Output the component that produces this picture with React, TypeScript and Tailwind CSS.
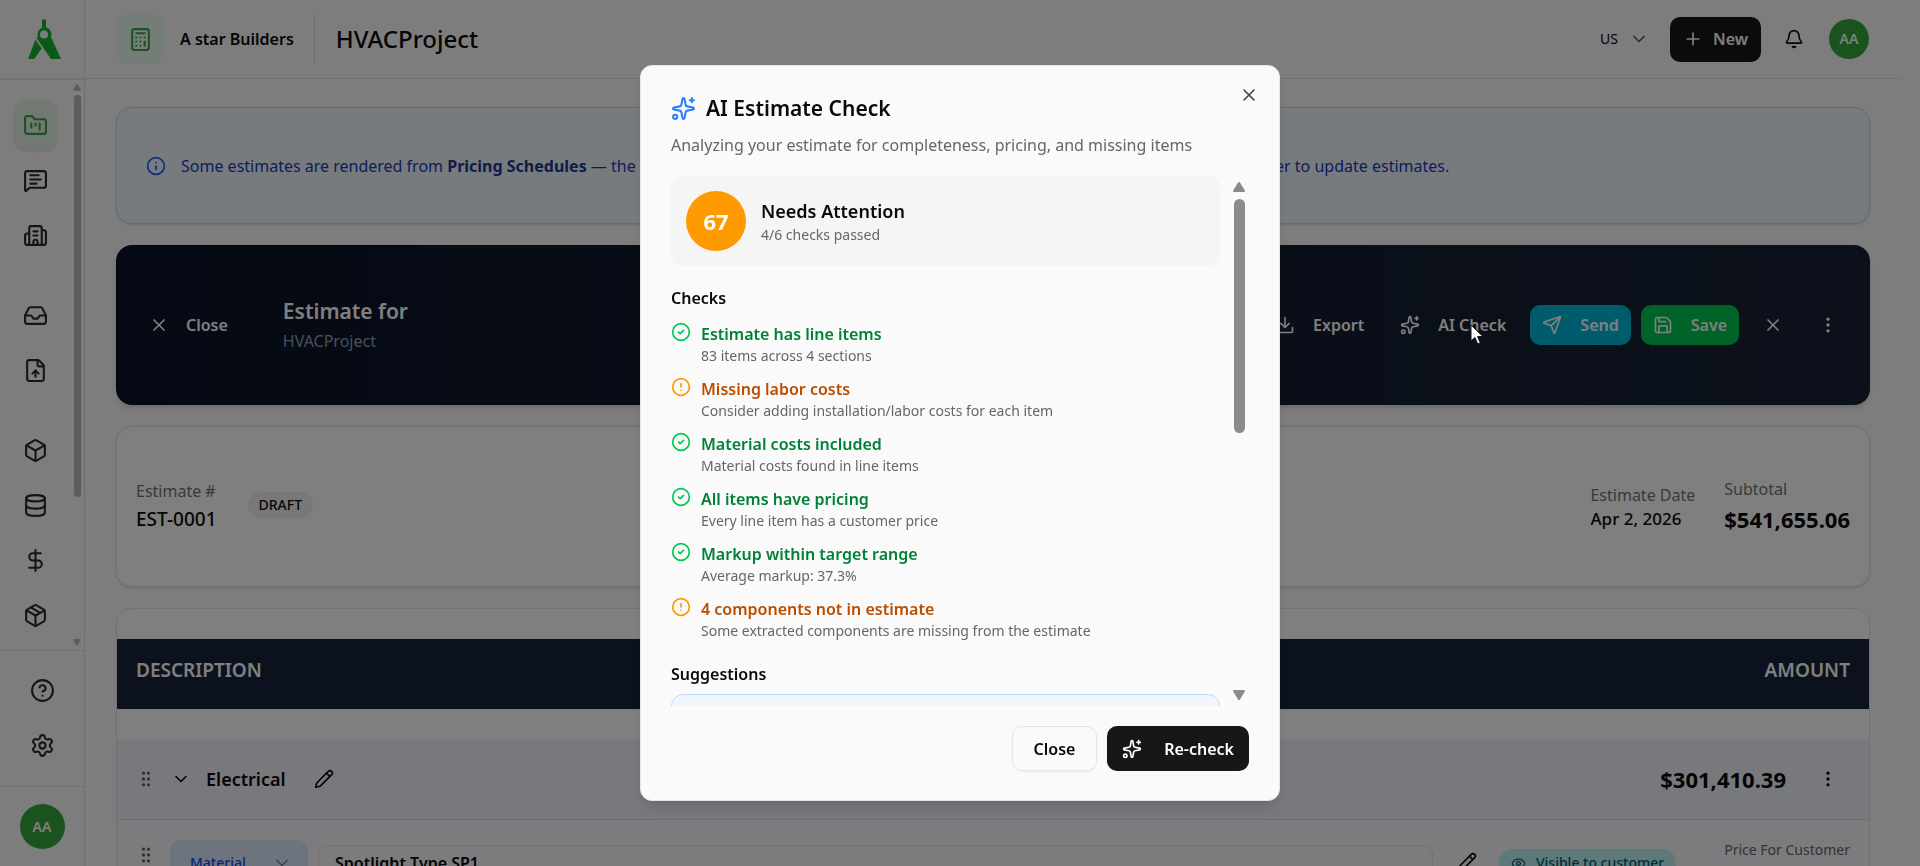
import { useState } from "react";
import type { ComponentType } from "react";
import {
  Bell,
  Box,
  Building2,
  Calculator,
  ChevronDown,
  CircleAlert,
  CircleCheck,
  CircleQuestionMark,
  Database,
  DollarSign,
  Download,
  EllipsisVertical,
  Eye,
  FileUp,
  FolderKanban,
  GripVertical,
  Inbox,
  Info,
  MessageSquareText,
  Package,
  Pencil,
  Plus,
  Save,
  Send,
  Settings,
  Sparkles,
  X,
} from "lucide-react";

type IconType = ComponentType<{ size?: number; className?: string }>;

type NavItem = { label: string; icon: IconType };

type Check = { passed: boolean; title: string; detail: string };

const navGroups: NavItem[][] = [
  [
    { label: "Projects", icon: FolderKanban },
    { label: "Messages", icon: MessageSquareText },
    { label: "Companies", icon: Building2 },
  ],
  [
    { label: "Inbox", icon: Inbox },
    { label: "Uploads", icon: FileUp },
  ],
  [
    { label: "Assemblies", icon: Box },
    { label: "Database", icon: Database },
    { label: "Costs", icon: DollarSign },
    { label: "Materials", icon: Package },
  ],
];

const checks: Check[] = [
  {
    passed: true,
    title: "Estimate has line items",
    detail: "83 items across 4 sections",
  },
  {
    passed: false,
    title: "Missing labor costs",
    detail: "Consider adding installation/labor costs for each item",
  },
  {
    passed: true,
    title: "Material costs included",
    detail: "Material costs found in line items",
  },
  {
    passed: true,
    title: "All items have pricing",
    detail: "Every line item has a customer price",
  },
  {
    passed: true,
    title: "Markup within target range",
    detail: "Average markup: 37.3%",
  },
  {
    passed: false,
    title: "4 components not in estimate",
    detail: "Some extracted components are missing from the estimate",
  },
];

function Logo() {
  return (
    <svg width="34" height="42" viewBox="0 0 34 42" fill="#12b52c">
      <path d="M15 3a2 2 0 0 1 4 0v8h-4z" />
      <path
        fillRule="evenodd"
        d="M17 9a7.500 7.500 0 0 1 7 10L34 41H24L9.500 20l1.500-1A7.500 7.500 0 0 1 17 9zm0 3.500a4 4 0 1 0 0 8 4 4 0 0 0 0-8z"
      />
      <path d="M8.500 21.500 14.800 30.500 7 41H1z" />
    </svg>
  );
}

function Arrow({ size, down }: { size: number; down?: boolean }) {
  return (
    <svg
      width={size}
      viewBox="0 0 12 10"
      fill="currentColor"
      className={down ? "rotate-180" : ""}
    >
      <path d="M6 0c.5 0 .8.2 1 .6l4.800 7.800c.3.700 0 1.600-.8 1.600H1C.2 10-.1 9.100.2 8.400L5 .6C5.200.2 5.500 0 6 0z" />
    </svg>
  );
}

function Sidebar() {
  return (
    <aside className="flex w-[85px] shrink-0 flex-col border-r border-[#e0e0e0] bg-[#fafafa]">
      <div className="flex h-20 shrink-0 items-center justify-center border-b-2 border-[#e4e4e4] pl-1">
        <a href="#home" aria-label="Home">
          <Logo />
        </a>
      </div>
      <div className="flex min-h-0 flex-1 justify-between overflow-hidden">
        <nav className="flex flex-col gap-[30px] pt-5 pl-[14px]">
          {navGroups.map((group, groupIndex) => (
            <div key={groupIndex} className="flex flex-col gap-[5px]">
              {group.map((item, index) => {
                const active = groupIndex === 0 && index === 0;
                return (
                  <a
                    key={item.label}
                    href="#nav"
                    aria-label={item.label}
                    className={`flex h-[50px] w-[43px] items-center justify-center rounded-xl ${
                      active
                        ? "bg-[#e4f0e5] text-[#3da447] shadow-sm"
                        : "text-[#2b2b2b]"
                    }`}
                  >
                    <item.icon size={25} />
                  </a>
                );
              })}
            </div>
          ))}
        </nav>
        <div className="flex w-[14px] flex-col items-center py-1 text-[#b8b8b8]">
          <Arrow size={8} />
          <div className="mt-1 h-[402px] w-[7px] rounded-full bg-[#b8b8b8]" />
          <div className="mt-auto">
            <Arrow size={8} down />
          </div>
        </div>
      </div>
      <div className="flex flex-col items-center gap-[5px] border-t border-[#e0e0e0] pt-[14px] pb-4 text-[#2b2b2b]">
        <button aria-label="Help" className="flex size-[50px] items-center justify-center">
          <CircleQuestionMark size={25} />
        </button>
        <button aria-label="Settings" className="flex size-[50px] items-center justify-center">
          <Settings size={25} />
        </button>
      </div>
      <div className="flex h-20 shrink-0 items-center justify-center border-t border-[#e0e0e0]">
        <button className="flex size-[45px] items-center justify-center rounded-full bg-[#36a73f] text-sm font-semibold text-white">
          AA
        </button>
      </div>
    </aside>
  );
}

function Header() {
  return (
    <header className="flex h-[79px] shrink-0 items-center justify-between border-b border-[#e0e0e0] pr-8 pl-[30px]">
      <div className="flex items-center">
        <div className="flex size-[50px] items-center justify-center rounded-xl bg-[#e9faf1] text-[#3da447]">
          <Calculator size={25} />
        </div>
        <span className="ml-[15px] text-base font-semibold">A star Builders</span>
        <div className="ml-5 h-[50px] w-px bg-[#dcdcdc]" />
        <h1 className="ml-[21px] text-2xl font-medium">HVACProject</h1>
      </div>
      <div className="flex items-center">
        <button className="flex items-center gap-[11px] text-sm">
          US
          <ChevronDown size={20} className="text-[#555555]" />
        </button>
        <button className="ml-[21px] flex h-[45px] items-center gap-[10px] rounded-[10px] bg-[#171717] px-[13px] text-base font-semibold text-white">
          <Plus size={20} />
          New
        </button>
        <button aria-label="Notifications" className="ml-[23px]">
          <Bell size={20} />
        </button>
        <button className="ml-[25px] flex size-10 items-center justify-center rounded-full bg-[#36a73f] text-sm font-semibold text-white">
          AA
        </button>
      </div>
    </header>
  );
}

function EstimateToolbar() {
  return (
    <section className="flex h-40 shrink-0 items-center justify-between rounded-2xl bg-linear-to-r from-[#0b1326] to-[#172235] pr-8 pl-[33px] text-white shadow-md">
      <div className="flex items-center">
        <button className="flex items-center gap-[17px] text-base font-semibold">
          <X size={20} />
          Close
        </button>
        <div className="ml-[55px]">
          <h2 className="text-[21px] leading-8 font-semibold">Estimate for</h2>
          <p className="text-base leading-7 text-slate-400">HVACProject</p>
        </div>
      </div>
      <div className="flex items-center text-base font-semibold">
        <button className="flex items-center gap-[18px]">
          <Download size={20} />
          Export
        </button>
        <button className="ml-9 flex items-center gap-[18px]">
          <Sparkles size={20} />
          AI Check
        </button>
        <button className="ml-6 flex h-10 items-center gap-[18px] rounded-[10px] bg-cyan-500 px-3">
          <Send size={20} />
          Send
        </button>
        <button className="ml-[10px] flex h-10 items-center gap-[18px] rounded-[10px] bg-green-500 px-3">
          <Save size={20} />
          Save
        </button>
        <button aria-label="Discard" className="ml-6">
          <X size={20} />
        </button>
        <button aria-label="More" className="ml-[35px]">
          <EllipsisVertical size={20} />
        </button>
      </div>
    </section>
  );
}

function EstimateSummary() {
  return (
    <section className="flex h-[161px] shrink-0 items-center justify-between rounded-2xl border border-[#e2e2e2] bg-white px-[19px] pb-1 shadow-sm">
      <div className="flex items-center gap-[31px]">
        <div>
          <p className="text-base leading-7 text-[#737373]">Estimate #</p>
          <p className="text-[19px] leading-7 font-medium">EST-0001</p>
        </div>
        <span className="rounded-full bg-[#f1f1f1] px-[11px] py-[3px] text-sm font-medium">
          DRAFT
        </span>
      </div>
      <div className="flex items-center gap-[29px]">
        <div className="pt-1">
          <p className="text-base leading-6 text-[#737373]">Estimate Date</p>
          <p className="text-[17px] leading-6 font-medium">Apr 2, 2026</p>
        </div>
        <div>
          <p className="text-base leading-7 text-[#737373]">Subtotal</p>
          <p className="text-[22px] leading-8 font-bold">$541,655.06</p>
        </div>
      </div>
    </section>
  );
}

function EstimateTable() {
  return (
    <section className="shrink-0 rounded-2xl border border-[#e2e2e2] bg-white pt-[30px]">
      <div className="flex h-[70px] items-center justify-between bg-[#18243a] px-[19px] pb-2 text-[19px] font-semibold text-white">
        <span>DESCRIPTION</span>
        <span>AMOUNT</span>
      </div>
      <div className="mt-[30px] flex h-[81px] items-center justify-between border-b border-[#dadfe6] bg-[#eff3fb] px-[19px]">
        <div className="flex items-center">
          <GripVertical size={20} className="text-[#666666]" />
          <button aria-label="Collapse section" className="ml-[15px]">
            <ChevronDown size={20} />
          </button>
          <h3 className="ml-[15px] text-lg font-semibold">Electrical</h3>
          <button aria-label="Rename section" className="ml-7">
            <Pencil size={20} />
          </button>
        </div>
        <div className="flex items-center pr-3">
          <span className="text-[22px] font-bold">$301,410.39</span>
          <button aria-label="Section options" className="ml-8">
            <EllipsisVertical size={20} />
          </button>
        </div>
      </div>
      <div className="flex h-[100px] items-start justify-between bg-[#f8f8fc] px-[19px] pt-5">
        <div className="flex flex-1 items-start">
          <GripVertical size={20} className="mt-[5px] text-[#666666]" />
          <button className="ml-[14px] flex h-[46px] w-[138px] items-center justify-between rounded-[10px] bg-[#dbe9fd] pr-4 pl-5 text-sm font-medium text-blue-700">
            Material
            <ChevronDown size={20} className="text-[#7f8ba0]" />
          </button>
          <input
            aria-label="Item name"
            defaultValue="Spotlight Type SP1"
            className="mt-[5px] ml-[10px] h-9 min-w-0 flex-1 rounded-[10px] border border-[#e0e0e0] bg-transparent px-4 text-base font-semibold"
          />
          <button aria-label="Edit item" className="mt-3 ml-6">
            <Pencil size={20} />
          </button>
          <span className="mt-[9px] ml-[22px] flex h-7 items-center gap-[10px] rounded-full bg-[#bdf3f3] px-3 text-sm font-medium text-cyan-800">
            <Eye size={15} />
            Visible to customer
          </span>
        </div>
        <span className="ml-12 text-sm text-[#666666]">Price For Customer</span>
      </div>
    </section>
  );
}

function CheckRow({ check }: { check: Check }) {
  return (
    <li className="flex h-[45px] gap-[10px]">
      {check.passed ? (
        <CircleCheck size={20} className="shrink-0 text-green-500" />
      ) : (
        <CircleAlert size={20} className="shrink-0 text-amber-500" />
      )}
      <div>
        <p
          className={`text-base leading-6 font-semibold ${
            check.passed ? "text-green-700" : "text-amber-700"
          }`}
        >
          {check.title}
        </p>
        <p className="text-sm leading-5 text-[#666666]">{check.detail}</p>
      </div>
    </li>
  );
}

function CheckDialog({ onClose }: { onClose: () => void }) {
  return (
    <div className="fixed inset-0 z-10 flex items-center justify-center bg-black/50">
      <div
        role="dialog"
        aria-labelledby="check-title"
        className="relative w-[640px] rounded-xl border border-[#e5e5e5] bg-[#fafafa] px-[30px] pt-[27px] pb-[29px] shadow-lg"
      >
        <button
          aria-label="Close dialog"
          onClick={onClose}
          className="absolute top-[19px] right-5 text-[#444444]"
        >
          <X size={20} />
        </button>
        <h2
          id="check-title"
          className="flex items-center gap-[10px] text-[21px] leading-[30px] font-semibold"
        >
          <Sparkles size={25} className="text-blue-500" />
          AI Estimate Check
        </h2>
        <p className="mt-2 text-base leading-7 text-[#666666]">
          Analyzing your estimate for completeness, pricing, and missing items
        </p>
        <div className="mt-[17px] flex h-[530px] justify-between">
          <div className="w-[549px] overflow-hidden">
            <div className="flex h-[90px] items-center gap-[15px] rounded-xl bg-[#f5f5f5] px-[15px]">
              <div className="flex size-[60px] items-center justify-center rounded-full bg-amber-500 text-[22px] font-bold text-white">
                67
              </div>
              <div>
                <p className="text-lg leading-7 font-semibold">Needs Attention</p>
                <p className="text-sm leading-5 text-[#666666]">
                  4/6 checks passed
                </p>
              </div>
            </div>
            <h3 className="mt-5 text-base leading-6 font-semibold">Checks</h3>
            <ul className="mt-3 flex flex-col gap-[10px]">
              {checks.map((check) => (
                <CheckRow key={check.title} check={check} />
              ))}
            </ul>
            <h3 className="mt-5 text-base leading-6 font-semibold">
              Suggestions
            </h3>
            <div className="mt-2 h-[90px] rounded-xl border border-blue-200 bg-[#f1f6fc]" />
          </div>
          <div className="flex w-5 flex-col items-center py-[6px] text-[#8b8b8b]">
            <Arrow size={12} />
            <div className="mt-[7px] h-[234px] w-[11px] rounded-full bg-[#8b8b8b]" />
            <div className="mt-auto">
              <Arrow size={12} down />
            </div>
          </div>
        </div>
        <div className="mt-5 flex justify-end gap-[10px] text-base font-semibold">
          <button
            onClick={onClose}
            className="h-[45px] w-[85px] rounded-[10px] border border-[#e5e5e5] shadow-xs"
          >
            Close
          </button>
          <button className="flex h-[45px] w-[142px] items-center justify-between rounded-[10px] bg-[#171717] px-[15px] text-white">
            <Sparkles size={20} />
            Re-check
          </button>
        </div>
      </div>
    </div>
  );
}

export default function App() {
  const [open, setOpen] = useState(true);

  return (
    <div className="flex h-screen overflow-hidden bg-[#fafafa] font-['Noto_Sans','Open_Sans',sans-serif] text-[#0a0a0a]">
      <Sidebar />
      <div className="mr-[19px] flex min-w-0 flex-1 flex-col">
        <Header />
        <main className="flex min-h-0 flex-1 flex-col gap-[21px] overflow-hidden px-[31px] pt-7">
          <section className="flex h-[117px] shrink-0 items-center gap-[15px] rounded-2xl border border-blue-200 bg-[#eff6fc] px-[29px] text-base text-blue-800 shadow-sm">
            <Info size={20} className="shrink-0 text-blue-600" />
            <p>
              Some estimates are rendered from{" "}
              <strong className="font-bold text-blue-900">
                Pricing Schedules
              </strong>{" "}
              — the rows there follow the linked schedule and are read only.
              Open Pricing Schedule Builder to update estimates.
            </p>
          </section>
          <EstimateToolbar />
          <EstimateSummary />
          <EstimateTable />
        </main>
      </div>
      {open && <CheckDialog onClose={() => setOpen(false)} />}
      <svg
        width="16"
        height="22"
        viewBox="0 0 16 22"
        className="pointer-events-none fixed top-[324px] left-[1470px] z-20"
      >
        <path
          d="M1 1v16l4-3.500 2.700 6.500 2.600-1.100L7.600 12.600H13z"
          fill="#ffffff"
          stroke="#111111"
        />
      </svg>
    </div>
  );
}
